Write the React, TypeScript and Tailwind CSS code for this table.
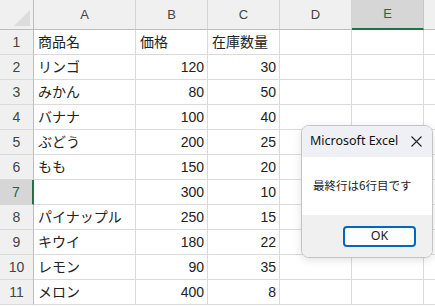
const rows: [string, string, string][] = [
  ["商品名", "価格", "在庫数量"],
  ["リンゴ", "120", "30"],
  ["みかん", "80", "50"],
  ["バナナ", "100", "40"],
  ["ぶどう", "200", "25"],
  ["もも", "150", "20"],
  ["", "300", "10"],
  ["パイナップル", "250", "15"],
  ["キウイ", "180", "22"],
  ["レモン", "90", "35"],
  ["メロン", "400", "8"],
]

const cols = ["A", "B", "C", "D", "E"]

const font = { fontFamily: "'Liberation Sans', 'Noto Sans CJK JP', sans-serif" }

export default function App() {
  return (
    <div className="relative w-[435px] h-[306px] overflow-hidden bg-white text-[#222]" style={font}>
      <div className="grid grid-cols-[34px_102px_72px_72px_72px_72px_1fr] grid-rows-[30px_repeat(11,25px)]">
        {/* corner */}
        <div className="relative bg-[#f0f0f0] border-r border-b border-[#bdbdbd]">
          <div className="absolute left-[14px] top-[10px] w-[16px] h-[16px] bg-[#dcdcdc] [clip-path:polygon(100%_0,100%_100%,0_100%)]" />
        </div>
        {cols.map((c) =>
          c === "E" ? (
            <div
              key={c}
              className="flex items-center justify-center bg-[#d6d6d6] border-r border-[#c6c6c6] border-b-2 border-b-[#217346] text-[13px] text-[#1e6b41]"
            >
              {c}
            </div>
          ) : (
            <div
              key={c}
              className="flex items-center justify-center bg-[#f0f0f0] border-r border-b border-[#d4d4d4] border-b-[#bdbdbd] text-[13px] text-[#444]"
            >
              {c}
            </div>
          )
        )}
        <div className="bg-[#f0f0f0] border-b border-[#bdbdbd]" />

        {rows.map((r, i) => {
          const n = i + 1
          const sel = n === 7
          return (
            <div key={n} className="contents">
              <div
                className={
                  sel
                    ? "flex items-center justify-center bg-[#d6d6d6] border-b border-[#d4d4d4] border-r-2 border-r-[#217346] text-[14px] text-[#2f5d43]"
                    : "flex items-center justify-center bg-[#f0f0f0] border-b border-[#d9d9d9] border-r border-r-[#bdbdbd] text-[14px] text-[#444]"
                }
              >
                {n}
              </div>
              <div className="flex items-center pl-[4px] border-r border-b border-[#dadada] text-[14px] whitespace-nowrap">
                {r[0]}
              </div>
              <div
                className={
                  "flex items-center border-r border-b border-[#dadada] text-[14px] whitespace-nowrap " +
                  (i === 0 ? "pl-[4px]" : "justify-end pr-[3px]")
                }
              >
                {r[1]}
              </div>
              <div
                className={
                  "flex items-center border-r border-b border-[#dadada] text-[14px] whitespace-nowrap " +
                  (i === 0 ? "pl-[4px]" : "justify-end pr-[3px]")
                }
              >
                {r[2]}
              </div>
              <div className="border-r border-b border-[#dadada]" />
              <div className="border-r border-b border-[#dadada]" />
              <div className="border-b border-[#dadada]" />
            </div>
          )
        })}
      </div>

      {/* message box */}
      <div
        className="absolute left-[301px] top-[125px] w-[132px] h-[133px] flex flex-col rounded-[8px] border border-[#c4c4c4] overflow-hidden shadow-[0_2px_8px_rgba(0,0,0,0.12)] bg-white"
      >
        <div className="h-[31px] shrink-0 flex items-center justify-between bg-[#eff0f6] pl-[8px] pr-[10px]">
          <span className="text-[12.5px] text-[#111]" style={{ fontFamily: "'Noto Sans', sans-serif" }}>
            Microsoft Excel
          </span>
          <svg width="11" height="11" viewBox="0 0 11 11" className="text-[#222]">
            <path d="M0.5 0.5 L10.5 10.5 M10.5 0.5 L0.5 10.5" stroke="currentColor" strokeWidth="1.1" />
          </svg>
        </div>
        <div className="h-[58px] shrink-0 flex items-center pl-[11px] bg-white text-[11.5px] text-[#222]" style={{ fontFamily: "'Noto Sans CJK JP', sans-serif" }}>
          最終行は6行目です
        </div>
        <div className="flex-1 bg-[#f0f0f0] flex items-start justify-end pr-[16px] pt-[11px]">
          <div
            className="w-[73px] h-[21px] rounded-[4px] border-2 border-[#0067c0] bg-[#fdfdfd] flex items-center justify-center text-[12.5px] text-[#222]"
            style={{ fontFamily: "'Noto Sans', sans-serif" }}
          >
            OK
          </div>
        </div>
      </div>
    </div>
  )
}
